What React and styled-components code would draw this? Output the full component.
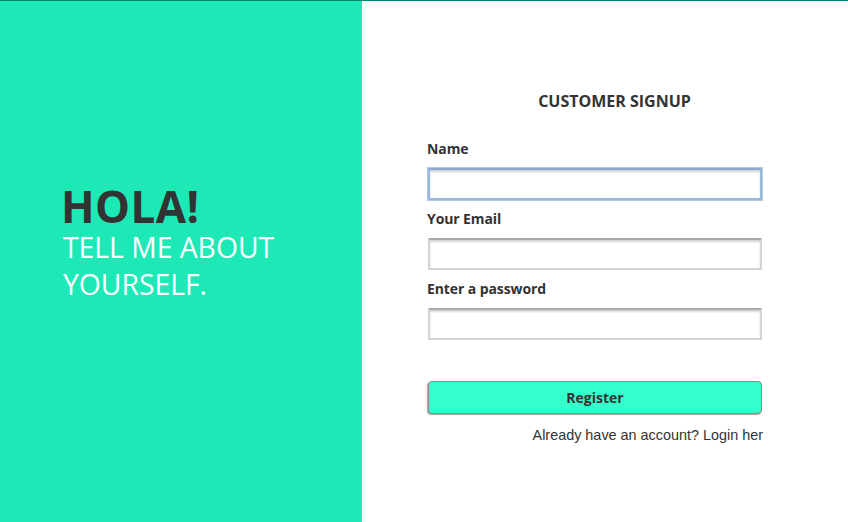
import React from "react";
import styled, { createGlobalStyle } from "styled-components";

const Global = createGlobalStyle`
  html, body { margin: 0; padding: 0; background: #fff; }
  * { box-sizing: border-box; }
`;

const Page = styled.div`
  display: flex;
  height: 522px;
  border-top: 1px solid #00856f;
  font-family: "Open Sans", "Noto Sans", sans-serif;
  color: #333;
`;

const Hero = styled.section`
  width: 362px;
  flex: none;
  background: #1de9b6;
  padding: 182px 0 0 61px;
`;

const Hello = styled.h1`
  margin: 0;
  font-size: 44px;
  font-weight: 700;
  line-height: 46px;
  color: #333;
  letter-spacing: 0.4px;
`;

const Tagline = styled.p`
  margin: 0 0 0 2px;
  font-size: 28.3px;
  font-weight: 400;
  line-height: 37px;
  color: #fff;
  width: 250px;
`;

const Panel = styled.section`
  flex: 1;
  padding: 90px 0 0 64px;
`;

const Form = styled.form`
  width: 337px;
  display: flex;
  flex-direction: column;
`;

const Title = styled.h2`
  margin: 0 0 28px;
  padding-left: 40px;
  text-align: center;
  font-size: 16px;
  font-weight: 700;
  line-height: 20px;
  color: #333;
`;

const Label = styled.label`
  display: block;
  font-size: 14px;
  font-weight: 700;
  line-height: 20px;
  margin: 0 0 9px 1px;
  color: #333;
  letter-spacing: -0.1px;
`;

const Input = styled.input`
  display: block;
  width: 334px;
  height: 32px;
  margin: 0 0 9px 2px;
  border: 2px solid ${p => (p.$focused ? "#9bb8d8" : "#d4d4d4")};
  border-top-color: ${p => (p.$focused ? "#8aa9cf" : "#aaa")};
  outline: ${p => (p.$focused ? "1px solid #b4cbe6" : "none")};
  box-shadow: inset 0 2px 2px rgba(0, 0, 0, 0.18);
  background: #fff;
`;

const Button = styled.button`
  width: 334px;
  height: 33px;
  margin: 32px 0 0 2px;
  background: #33ffcc;
  border: 1px solid #8a8a8a;
  border-radius: 4px;
  box-shadow: -1px 1px 1px rgba(0, 0, 0, 0.35);
  font-family: "Open Sans", "Noto Sans", sans-serif;
  font-size: 14px;
  font-weight: 700;
  color: #333;
  cursor: pointer;
`;

const Footer = styled.p`
  margin: 12px 0 0;
  text-align: right;
  font-family: "Liberation Sans", Arial, sans-serif;
  font-size: 14.4px;
  line-height: 18px;
  color: #333;
`;

export default function App() {
  return (
    <>
      <Global />
      <Page>
        <Hero>
          <Hello>HOLA!</Hello>
          <Tagline>TELL ME ABOUT YOURSELF.</Tagline>
        </Hero>
        <Panel>
          <Form onSubmit={e => e.preventDefault()}>
            <Title>CUSTOMER SIGNUP</Title>
            <Label>Name</Label>
            <Input $focused type="text" />
            <Label>Your Email</Label>
            <Input type="email" />
            <Label>Enter a password</Label>
            <Input type="password" />
            <Button type="submit">Register</Button>
            <Footer>Already have an account? Login her</Footer>
          </Form>
        </Panel>
      </Page>
    </>
  );
}
